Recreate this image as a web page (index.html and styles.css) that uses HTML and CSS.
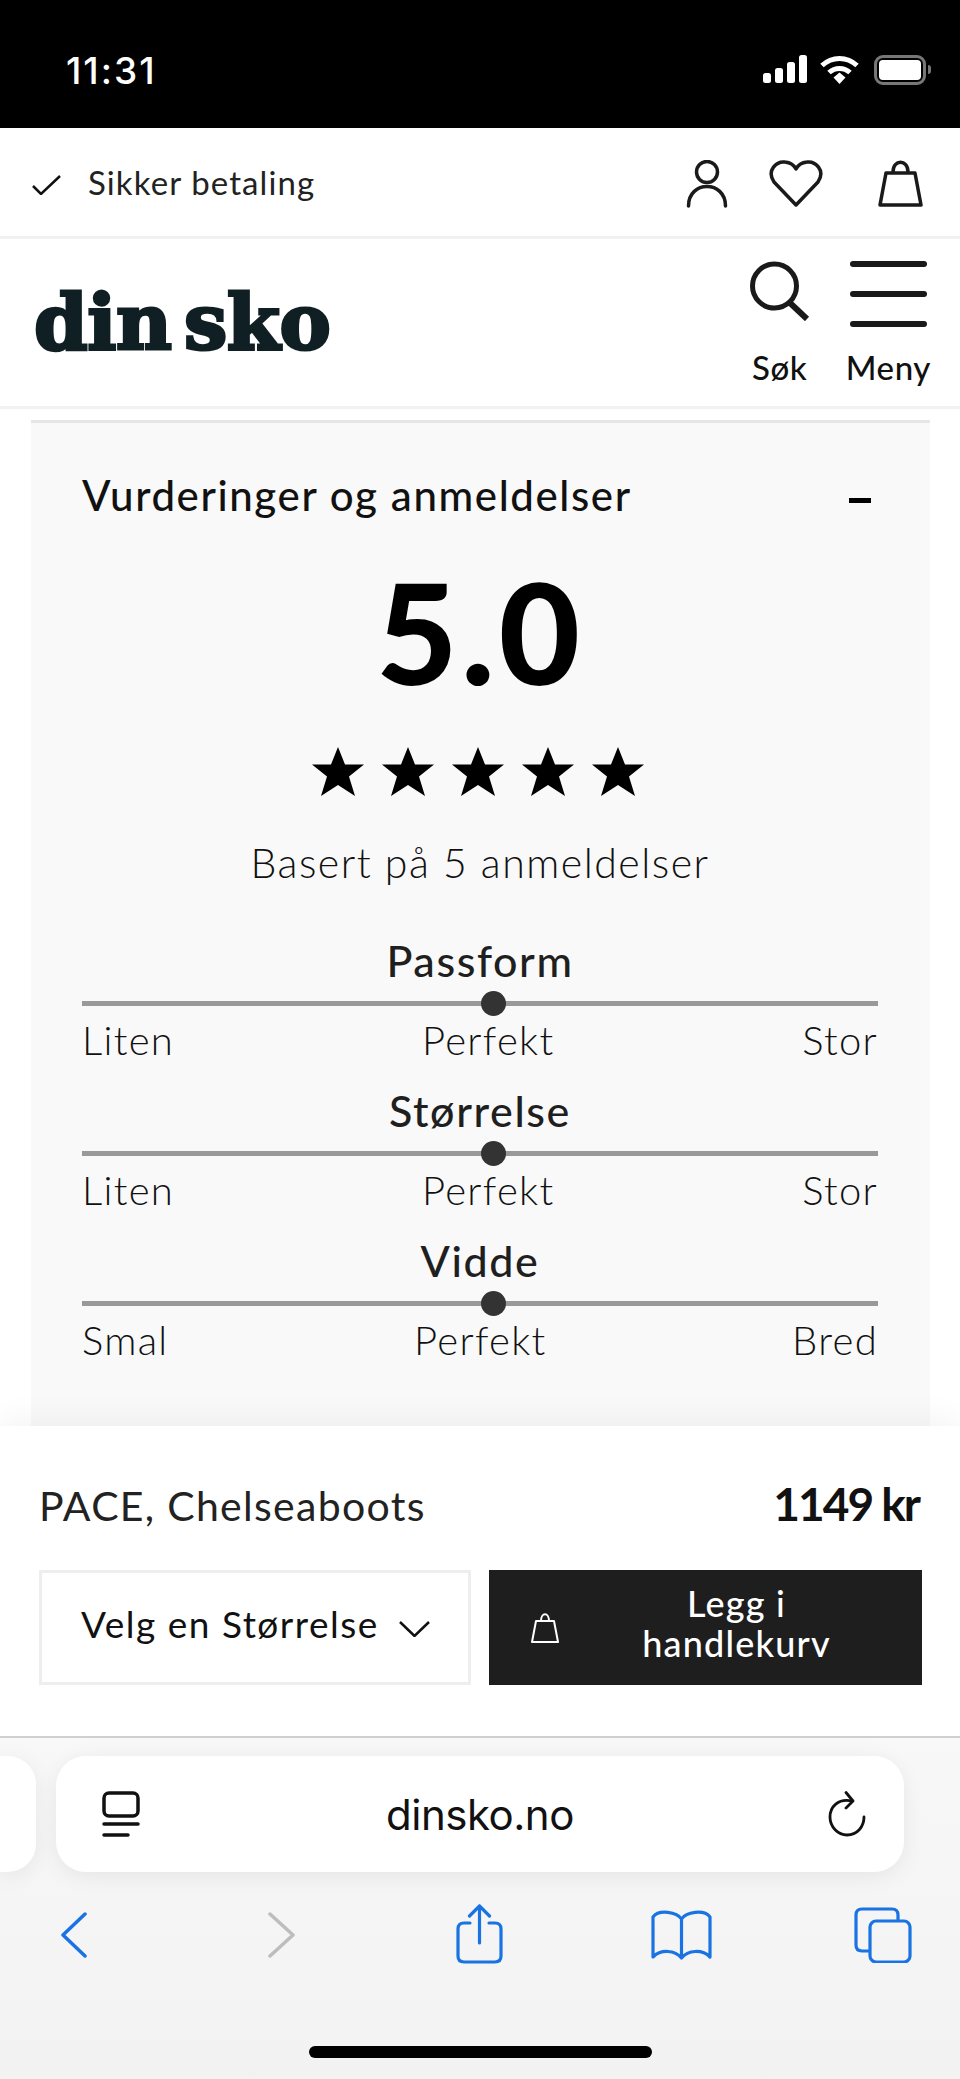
FILE: index.html
```html
<!DOCTYPE html>
<html lang="no">

<head>
    <meta charset="UTF-8">
    <title>PACE, Chelseaboots</title>
    <link rel="stylesheet" href="styles.css">
</head>

<body>
    <div class="status-bar">
        <span class="clock">11:31</span>
        <div class="status-icons">
            <svg width="44" height="28" viewBox="0 0 44 28" fill="#fff"><rect x="0" y="18" width="8" height="10" rx="2.5"/><rect x="12" y="13" width="8" height="15" rx="2.5"/><rect x="24" y="7" width="8" height="21" rx="2.5"/><rect x="36" y="0" width="8" height="28" rx="2.5"/></svg>
            <svg class="wifi" width="39" height="29" viewBox="0 0 39 29" fill="none" stroke="#fff" stroke-width="5"><path d="M2 10.500C12 1 27 1 37 10.500"/><path d="M9 17.500C15 12 24 12 30 17.500"/><path d="M13.500 22.500L19.500 17.500L25.500 22.500L19.500 29Z" fill="#fff" stroke="none"/></svg>
            <div class="battery"><div class="battery-fill"></div></div>
            <div class="battery-nub"></div>
        </div>
    </div>

    <div class="top-row">
        <div class="secure">
            <svg width="29" height="20" viewBox="0 0 29 20" fill="none" stroke="#111" stroke-width="2.500"><path d="M1 11L9 19L28 1"/></svg>
            <span>Sikker betaling</span>
        </div>
        <div class="top-icons">
            <svg class="icon-user" width="42" height="48" viewBox="0 0 42 48" fill="none" stroke="#1a1a1a" stroke-width="3.500" stroke-linecap="round"><circle cx="21" cy="12" r="10.500"/><path d="M2.500 46C2.500 20 39.500 20 39.500 46"/></svg>
            <svg class="icon-heart" width="54" height="47" viewBox="0 0 54 47" fill="none" stroke="#1a1a1a" stroke-width="3.500" stroke-linejoin="round"><path d="M27 45L5 22C-3 10 8 1 16 2C21 2.500 25 5 27 9C29 5 33 2.500 38 2C46 1 57 10 49 22Z"/></svg>
            <svg class="icon-bag" width="45" height="47" viewBox="0 0 45 47" fill="none" stroke="#1a1a1a" stroke-width="3.500" stroke-linejoin="round"><path d="M8 13H37L43 45H2Z"/><path d="M15 12C15 -1 30 -1 30 12"/></svg>
        </div>
    </div>

    <div class="nav-row">
        <span class="logo">din sko</span>
        <div class="nav-items">
            <div class="nav-item nav-search">
                <svg width="60" height="60" viewBox="0 0 60 60" fill="none" stroke="#1a1a1a" stroke-width="5"><circle cx="24.500" cy="25" r="22"/><path d="M39 41L57 58" stroke-width="6"/></svg>
                <span>Søk</span>
            </div>
            <div class="nav-item nav-menu">
                <div class="burger"><i></i><i></i><i></i></div>
                <span>Meny</span>
            </div>
        </div>
    </div>

    <main class="content">
        <section class="panel">
            <div class="panel-head">
                <h2>Vurderinger og anmeldelser</h2>
                <span class="collapse"></span>
            </div>
            <div class="score">5.0</div>
            <div class="stars">
                <svg width="52" height="49" viewBox="0 0 52 49"><path d="M26 0L33 17.500H52L37 29.500L43 49L26 38L9 49L15 29.500L0 17.500H19Z"/></svg>
                <svg width="52" height="49" viewBox="0 0 52 49"><path d="M26 0L33 17.500H52L37 29.500L43 49L26 38L9 49L15 29.500L0 17.500H19Z"/></svg>
                <svg width="52" height="49" viewBox="0 0 52 49"><path d="M26 0L33 17.500H52L37 29.500L43 49L26 38L9 49L15 29.500L0 17.500H19Z"/></svg>
                <svg width="52" height="49" viewBox="0 0 52 49"><path d="M26 0L33 17.500H52L37 29.500L43 49L26 38L9 49L15 29.500L0 17.500H19Z"/></svg>
                <svg width="52" height="49" viewBox="0 0 52 49"><path d="M26 0L33 17.500H52L37 29.500L43 49L26 38L9 49L15 29.500L0 17.500H19Z"/></svg>
            </div>
            <p class="based">Basert på 5 anmeldelser</p>

            <div class="rating">
                <h3>Passform</h3>
                <div class="track"><span class="dot"></span></div>
                <div class="scale"><span>Liten</span><span>Perfekt</span><span>Stor</span></div>
            </div>
            <div class="rating">
                <h3>Størrelse</h3>
                <div class="track"><span class="dot"></span></div>
                <div class="scale"><span>Liten</span><span>Perfekt</span><span>Stor</span></div>
            </div>
            <div class="rating">
                <h3>Vidde</h3>
                <div class="track"><span class="dot"></span></div>
                <div class="scale"><span>Smal</span><span>Perfekt</span><span>Bred</span></div>
            </div>
        </section>
    </main>

    <div class="buy-bar">
        <div class="buy-info">
            <span class="product-name">PACE, Chelseaboots</span>
            <span class="price">1149 kr</span>
        </div>
        <div class="buy-actions">
            <div class="size-select">
                <span>Velg en Størrelse</span>
                <svg width="31" height="16" viewBox="0 0 31 16" fill="none" stroke="#111" stroke-width="2.500"><path d="M1 1L15.500 15L30 1"/></svg>
            </div>
            <button class="add-button" type="button">
                <svg width="28" height="30" viewBox="0 0 28 30" fill="none" stroke="#fff" stroke-width="2" stroke-linejoin="round"><path d="M5 8H23L27 29H1Z"/><path d="M10 8C10 -1 18 -1 18 8"/></svg>
                <span>Legg i<br>handlekurv</span>
            </button>
        </div>
    </div>

    <div class="safari">
        <div class="url-row">
            <div class="prev-tab"></div>
            <div class="url-pill">
                <svg width="38" height="46" viewBox="0 0 38 46" fill="none" stroke="#111" stroke-width="3.500" stroke-linecap="round"><rect x="2" y="2" width="34" height="23" rx="5"/><path d="M2 33H36"/><path d="M2 44H26"/></svg>
                <span class="url">dinsko.no</span>
                <svg width="38" height="46" viewBox="0 0 38 46" fill="none" stroke="#111" stroke-width="2.800" stroke-linecap="round" stroke-linejoin="round"><path d="M24 10C10 7 2 16 2 26C2 36 10 44 19 44C29 44 36 36 36 26"/><path d="M18 1.500L25 10L18 17"/></svg>
            </div>
        </div>
        <div class="toolbar">
            <svg class="tool-back" width="26" height="46" viewBox="0 0 26 46" fill="none" stroke="#1a73e3" stroke-width="3.500" stroke-linecap="round" stroke-linejoin="round"><path d="M24 2L2 23L24 44"/></svg>
            <svg class="tool-forward" width="27" height="46" viewBox="0 0 27 46" fill="none" stroke="#bdbdbd" stroke-width="3.500" stroke-linecap="round" stroke-linejoin="round"><path d="M2 2L25 23L2 44"/></svg>
            <svg class="tool-share" width="47" height="60" viewBox="0 0 47 60" fill="none" stroke="#1a73e3" stroke-width="3.200" stroke-linecap="round" stroke-linejoin="round"><path d="M14 19H8C4 19 2 21 2 25V52C2 56 4 58 8 58H39C43 58 45 56 45 52V25C45 21 43 19 39 19H33"/><path d="M23.500 39V2"/><path d="M13.500 12L23.500 2L33.500 12"/></svg>
            <svg class="tool-book" width="61" height="50" viewBox="0 0 61 50" fill="none" stroke="#1a73e3" stroke-width="3.200" stroke-linecap="round" stroke-linejoin="round"><path d="M30.500 9C26 2 8 -1 2 7V47C10 39 24 40 30.500 48C37 40 51 39 59 47V7C53 -1 35 2 30.500 9V46"/></svg>
            <svg class="tool-tabs" width="58" height="56" viewBox="0 0 58 56" fill="none" stroke="#1a73e3" stroke-width="3.200" stroke-linejoin="round"><rect x="16" y="14" width="40" height="41" rx="6"/><path d="M16 44H8C4 44 2 42 2 38V8C2 4 4 2 8 2H38C42 2 44 4 44 8V14"/></svg>
        </div>
        <div class="home-indicator"></div>
    </div>
</body>

</html>
```

FILE: styles.css
```css
* {
    box-sizing: border-box;
}

body {
    margin: 0;
    width: 960px;
    height: 2079px;
    overflow: hidden;
    display: flex;
    flex-direction: column;
    background: #fff;
    font-family: "Lato", sans-serif;
    color: #111;
}

h2,
h3,
p {
    margin: 0;
}

/* phone status bar */
.status-bar {
    height: 128px;
    flex: none;
    background: #000;
    color: #fff;
    display: flex;
    justify-content: space-between;
    padding: 55px 29px 0 66px;
}

.clock {
    font-family: "Inter", sans-serif;
    font-size: 37px;
    font-weight: 500;
    letter-spacing: 2px;
    line-height: 32px;
}

.status-icons {
    display: flex;
    align-items: flex-start;
    height: 30px;
}

.wifi {
    margin-left: 13px;
}

.battery {
    margin-left: 15px;
    width: 52px;
    height: 30px;
    border: 3px solid #777;
    border-radius: 9px;
    padding: 2px;
}

.battery-fill {
    height: 100%;
    background: #fff;
    border-radius: 4px;
}

.battery-nub {
    width: 3px;
    height: 9px;
    margin: 10px 0 0 2px;
    background: #777;
    border-radius: 0 3px 3px 0;
}

/* top row */
.top-row {
    height: 111px;
    flex: none;
    border-bottom: 3px solid #f1f1f1;
    display: flex;
    justify-content: space-between;
    padding: 32px 37px 0 32px;
}

.secure {
    display: flex;
    align-items: flex-start;
    gap: 27px;
    font-size: 33px;
    letter-spacing: 1.1px;
    line-height: 38px;
    color: #222;
    padding-top: 3px;
}

.secure svg {
    margin-top: 12px;
}

.top-icons {
    display: flex;
    align-items: flex-start;
}

.icon-heart {
    margin-left: 41px;
}

.icon-bag {
    margin-left: 55px;
}

/* logo row */
.nav-row {
    height: 170px;
    flex: none;
    border-bottom: 3px solid #f1f1f1;
    display: flex;
    justify-content: space-between;
    padding: 0 33px 0 34px;
}

.logo {
    font-family: "DejaVu Serif", serif;
    font-weight: 700;
    font-size: 77px;
    line-height: 90px;
    margin-top: 38px;
    letter-spacing: -0.5px;
    word-spacing: -14px;
    color: #0f1f23;
    -webkit-text-stroke: 3px #0f1f23;
}

.nav-items {
    display: flex;
    align-items: flex-start;
    padding-top: 22px;
    margin-right: -4px;
}

.nav-item {
    display: flex;
    flex-direction: column;
    align-items: center;
    font-size: 33px;
    font-weight: 500;
    line-height: 38px;
    letter-spacing: 0.6px;
}

.nav-item svg {
    height: 60px;
}

.nav-search {
    width: 60px;
    margin-right: 36px;
}

.nav-search span {
    margin-top: 27px;
}

.nav-menu span {
    margin-top: 21px;
}

.burger {
    width: 77px;
    height: 66px;
    display: flex;
    flex-direction: column;
    gap: 24px;
}

.burger i {
    display: block;
    flex: none;
    height: 6px;
    background: #1a1a1a;
    border-radius: 3px;
}

/* reviews */
.content {
    flex: 1;
    min-height: 0;
    overflow: hidden;
    padding: 11px 30px 0 31px;
}

.panel {
    background: #f9f9f9;
    border-top: 3px solid #e6e6e6;
    padding: 48px 52px 200px 51px;
}

.panel-head {
    display: flex;
    justify-content: space-between;
    align-items: center;
    padding-right: 7px;
}

.panel-head h2 {
    font-size: 42px;
    font-weight: 500;
    letter-spacing: 1.6px;
    line-height: 48px;
}

.collapse {
    width: 22px;
    height: 5px;
    margin-top: 10px;
    background: #000;
}

.score {
    margin-top: 37px;
    text-align: center;
    font-size: 140px;
    font-weight: 900;
    letter-spacing: 4px;
    line-height: 150px;
    color: #000;
}

.stars {
    display: flex;
    justify-content: center;
    gap: 18px;
    margin-top: 41px;
    padding-right: 5px;
}

.based {
    margin-top: 42px;
    text-align: center;
    font-size: 41px;
    font-weight: 300;
    letter-spacing: 1.5px;
    line-height: 50px;
    color: #111;
}

.rating {
    height: 150px;
}

.based + .rating {
    margin-top: 48px;
}

.rating h3 {
    text-align: center;
    font-size: 43px;
    font-weight: 500;
    letter-spacing: 1.6px;
    line-height: 50px;
    color: #1f1f1f;
}

.track {
    position: relative;
    height: 5px;
    margin-top: 15px;
    background: #999;
}

.dot {
    position: absolute;
    left: 51.7%;
    top: -10px;
    width: 25px;
    height: 25px;
    margin-left: -12.500px;
    border-radius: 50%;
    background: #333;
}

.scale {
    display: flex;
    justify-content: space-between;
    margin-top: 9px;
    font-size: 40px;
    font-weight: 300;
    letter-spacing: 1.3px;
    line-height: 50px;
    color: #111;
}

/* sticky buy bar */
.buy-bar {
    position: relative;
    height: 310px;
    flex: none;
    background: #fff;
    padding: 0 38px 0 39px;
    box-shadow: 0 -6px 30px rgba(0, 0, 0, 0.05);
}

.buy-info {
    display: flex;
    justify-content: space-between;
    align-items: baseline;
    padding-top: 53px;
    height: 144px;
    line-height: 50px;
}

.product-name {
    font-size: 41px;
    letter-spacing: 1.3px;
    font-weight: 400;
    color: #222;
}

.price {
    font-size: 46px;
    font-weight: 700;
    letter-spacing: -2px;
    margin-right: 3px;
    color: #111;
}

.buy-actions {
    display: flex;
    gap: 18px;
    height: 115px;
}

.size-select {
    width: 432px;
    border: 3px solid #eee;
    display: flex;
    align-items: center;
    justify-content: space-between;
    padding: 0 38px 9px 39px;
    font-size: 37px;
    letter-spacing: 1.5px;
    color: #111;
}

.size-select svg {
    margin-top: 11px;
}

.add-button {
    flex: 1;
    border: none;
    background: #1e1e1e;
    color: #fff;
    display: flex;
    align-items: center;
    padding: 0 0 10px 42px;
    font-family: inherit;
    font-size: 36px;
    font-weight: 500;
    letter-spacing: 1.2px;
    line-height: 40px;
}

.add-button svg {
    margin-top: 10px;
}

.add-button span {
    flex: 1;
    padding-right: 8px;
    text-align: center;
}

/* safari chrome */
.safari {
    height: 343px;
    flex: none;
    position: relative;
    background: linear-gradient(#f8f8f8, #f2f2f2);
    border-top: 2px solid #cfcfcf;
    padding-top: 18px;
}

.url-row {
    display: flex;
    gap: 20px;
    height: 116px;
}

.prev-tab {
    width: 36px;
    background: #fff;
    border-radius: 0 28px 28px 0;
    box-shadow: 0 4px 22px rgba(0, 0, 0, 0.07);
}

.url-pill {
    width: 848px;
    background: #fff;
    border-radius: 30px;
    box-shadow: 0 4px 22px rgba(0, 0, 0, 0.07);
    display: flex;
    align-items: center;
    justify-content: space-between;
    padding: 0 38px 0 46px;
}

.url {
    font-family: "Inter", sans-serif;
    font-size: 42px;
    letter-spacing: -0.5px;
    margin-right: 8px;
    color: #111;
}

.toolbar {
    display: flex;
    align-items: flex-start;
    padding: 32px 0 0 61px;
}

.tool-back {
    margin-top: 8px;
}

.tool-forward {
    margin: 8px 0 0 181px;
}

.tool-share {
    margin-left: 161px;
}

.tool-book {
    margin: 6px 0 0 148px;
}

.tool-tabs {
    margin: 3px 0 0 142px;
}

.home-indicator {
    position: absolute;
    left: 309px;
    bottom: 21px;
    width: 343px;
    height: 12px;
    border-radius: 6px;
    background: #000;
}
```
